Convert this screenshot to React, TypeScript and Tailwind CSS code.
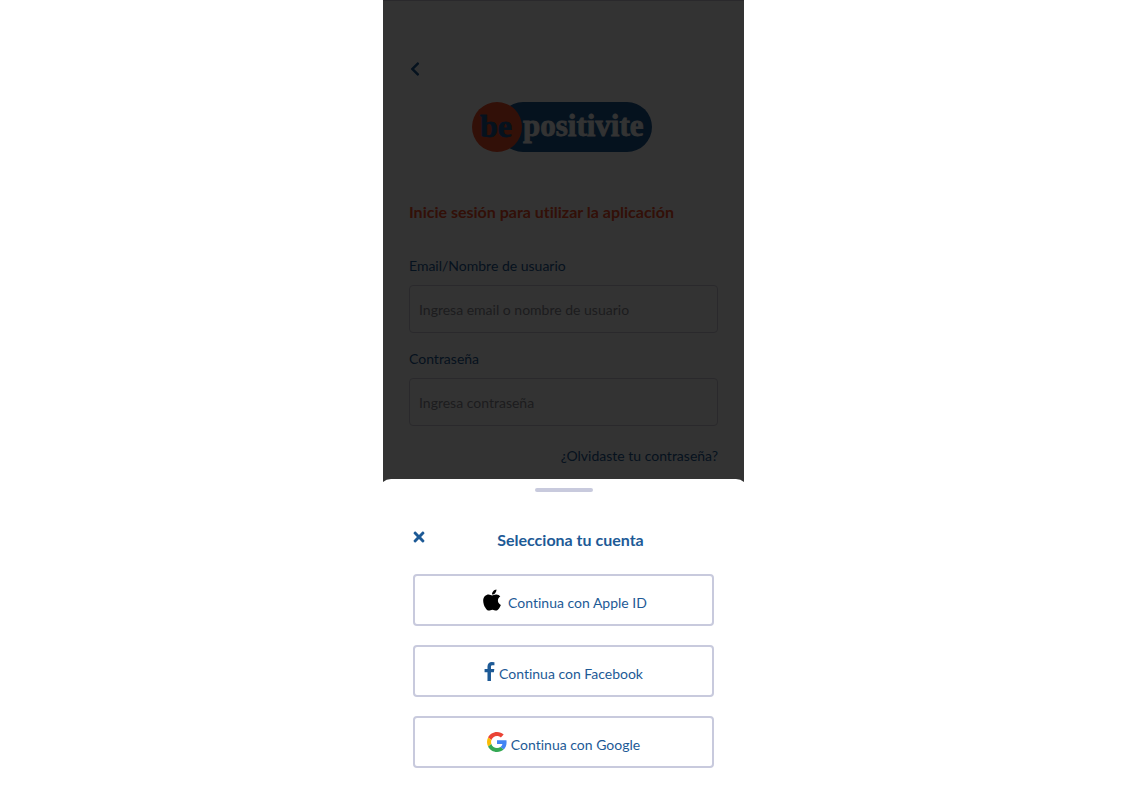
import { FaApple, FaChevronLeft, FaTimes } from "react-icons/fa";
import type { ReactNode } from "react";

function Logo() {
  return (
    <svg width="182" height="52" viewBox="0 0 182 52" role="img" aria-label="be positivite">
      <rect x="27" y="1" width="154" height="50" rx="25" fill="#1d5a96" />
      <circle cx="26" cy="26" r="25" fill="#f9502b" />
      <g fontFamily="'Liberation Serif', serif" fontWeight="700" strokeWidth="0.8">
        <text x="9" y="36" fontSize="32" fill="#1d5a96" stroke="#1d5a96">be</text>
        <text x="52" y="35" fontSize="31" fill="#ffffff" stroke="#ffffff">positivite</text>
      </g>
    </svg>
  );
}

function FacebookIcon() {
  return (
    <svg width="11" height="19" viewBox="470 0 882 1664" fill="currentColor" aria-hidden="true">
      <path d="M1343 12v264h-157q-86 0-116 36t-30 108v189h293l-39 296h-254v759h-306v-759h-255v-296h255v-218q0-186 104-288.500t277-102.500q147 0 228 12z" />
    </svg>
  );
}

function GoogleIcon() {
  return (
    <svg width="20" height="20" viewBox="0 0 48 48" aria-hidden="true">
      <path fill="#EA4335" d="M24 9.500c3.540 0 6.710 1.220 9.210 3.600l6.850-6.850C35.900 2.380 30.470 0 24 0 14.620 0 6.510 5.380 2.560 13.220l7.980 6.190C12.430 13.720 17.740 9.500 24 9.500z" />
      <path fill="#4285F4" d="M46.980 24.550c0-1.570-.15-3.090-.38-4.550H24v9.020h12.940c-.58 2.960-2.260 5.480-4.780 7.180l7.730 6c4.510-4.180 7.090-10.360 7.090-17.650z" />
      <path fill="#FBBC05" d="M10.530 28.590c-.48-1.450-.76-2.990-.76-4.590s.27-3.140.76-4.590l-7.980-6.190C.92 16.460 0 20.120 0 24c0 3.880.92 7.540 2.560 10.780l7.970-6.190z" />
      <path fill="#34A853" d="M24 48c6.480 0 11.930-2.130 15.890-5.810l-7.730-6c-2.150 1.450-4.920 2.300-8.160 2.300-6.260 0-11.570-4.220-13.470-9.910l-7.980 6.190C6.510 42.620 14.620 48 24 48z" />
    </svg>
  );
}

type FieldProps = { id: string; label: string; type: string; placeholder: string };

function Field({ id, label, type, placeholder }: FieldProps) {
  return (
    <div className="flex flex-col gap-[9px]">
      <label htmlFor={id} className="text-sm leading-5 text-[#1d5a96]">
        {label}
      </label>
      <input
        id={id}
        type={type}
        placeholder={placeholder}
        className="h-12 w-full rounded border border-[#d0cdda] bg-white px-[9px] text-sm placeholder:text-[#8e8e96]"
      />
    </div>
  );
}

function AccountButton({ icon, children }: { icon: ReactNode; children: ReactNode }) {
  return (
    <button
      type="button"
      className="flex h-[52px] w-full items-center justify-center gap-1 rounded border-2 border-[#c8cadd] bg-white text-sm text-[#1d5a96]"
    >
      {icon}
      <span className="pt-1.5">{children}</span>
    </button>
  );
}

export default function App() {
  return (
    <div className="min-h-screen bg-white pr-4 font-['Lato','Open_Sans',sans-serif] [font-variant-ligatures:none]">
      <div className="relative mx-auto min-h-screen w-full max-w-[361px] overflow-hidden">
        <main className="border-t border-[#d0cdda] px-[26px] pt-14">
          <button type="button" aria-label="Volver" className="-ml-0.5 flex h-6 items-center text-[#1d5a96]">
            <FaChevronLeft size={16} />
          </button>
          <div className="flex justify-center pt-5 pr-1">
            <Logo />
          </div>
          <h1 className="pt-[47px] text-base leading-6 font-bold text-[#f9502b]">
            Inicie sesión para utilizar la aplicación
          </h1>
          <form className="flex flex-col gap-4 pt-8">
            <Field id="user" label="Email/Nombre de usuario" type="text" placeholder="Ingresa email o nombre de usuario" />
            <Field id="password" label="Contraseña" type="password" placeholder="Ingresa contraseña" />
            <a href="#recuperar" className="self-end pt-1 text-sm leading-5 text-[#1d5a96]">
              ¿Olvidaste tu contraseña?
            </a>
          </form>
        </main>

        <div className="absolute inset-0 bg-black/80" />

        <section
          role="dialog"
          aria-labelledby="sheet-title"
          className="absolute -inset-x-1 bottom-0 rounded-t-xl bg-white px-[34px] pt-[9px] pb-[33px]"
        >
          <div className="mx-auto h-1 w-[58px] rounded-full bg-[#c8cadd]" />
          <header className="flex items-start pt-9 pb-[22px]">
            <button type="button" aria-label="Cerrar" className="-ml-0.5 pt-px text-[#1d5a96]">
              <FaTimes size={16} />
            </button>
            <h2 id="sheet-title" className="flex-1 text-center text-base leading-6 font-bold text-[#1d5a96]">
              Selecciona tu cuenta
            </h2>
          </header>
          <div className="flex flex-col gap-[19px]">
            <AccountButton icon={<FaApple size={24} className="text-black" />}>Continua con Apple ID</AccountButton>
            <AccountButton icon={<FacebookIcon />}>Continua con Facebook</AccountButton>
            <AccountButton icon={<GoogleIcon />}>Continua con Google</AccountButton>
          </div>
        </section>
      </div>
    </div>
  );
}
